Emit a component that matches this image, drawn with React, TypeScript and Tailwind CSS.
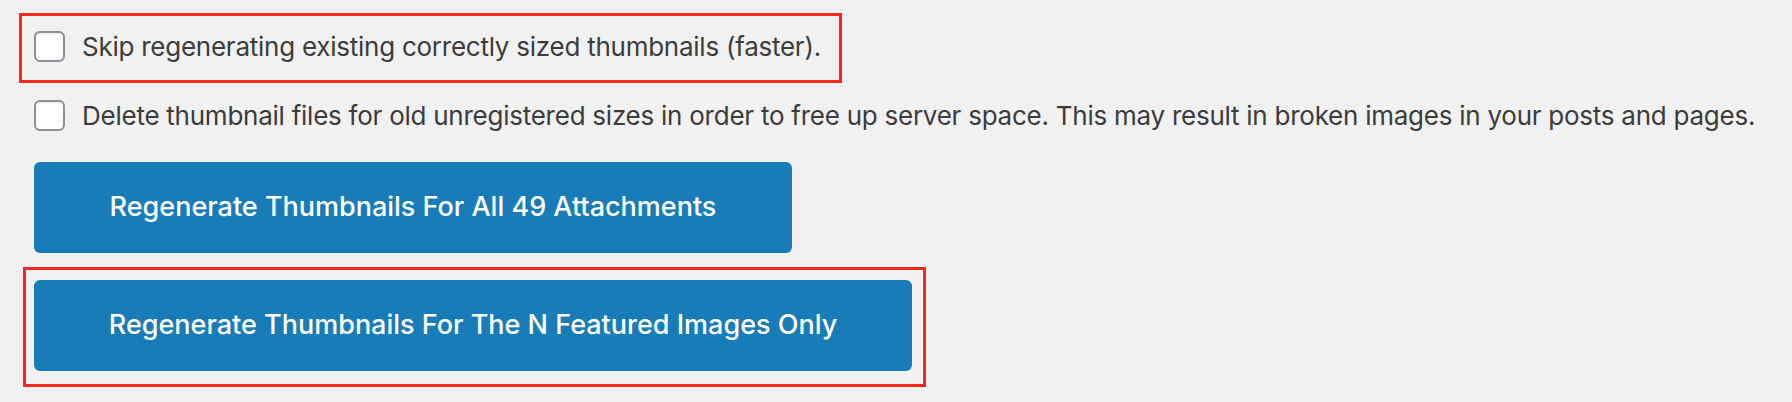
import React from "react";

const font = { fontFamily: "Inter, 'Liberation Sans', sans-serif" };

function Checkbox() {
  return (
    <span className="block w-[31px] h-[31px] shrink-0 rounded-[6px] border-2 border-[#8c9199] bg-white shadow-[inset_0_1px_2px_rgba(0,0,0,0.1)]" />
  );
}

export default function App() {
  return (
    <div
      className="w-[1792px] h-[402px] bg-[#f1f1f1] pt-[13px] overflow-hidden"
      style={font}
    >
      <div className="ml-[19px] w-[823px] h-[70px] border-[3px] border-[#f5281c] flex items-start pt-[15px] pl-[12px]">
        <label className="flex items-center gap-[17px] text-[26px] leading-[31px] text-[#3c3c3c] tracking-[-0.25px]">
          <Checkbox />
          <span>Skip regenerating existing correctly sized thumbnails (faster).</span>
        </label>
      </div>

      <label className="mt-[17px] ml-[34px] flex items-center gap-[17px] text-[26px] leading-[31px] text-[#3c3c3c] tracking-[-0.25px]">
        <Checkbox />
        <span>
          Delete thumbnail files for old unregistered sizes in order to free up server space. This may result in broken images in your posts and pages.
        </span>
      </label>

      <button className="mt-[31px] ml-[34px] w-[758px] h-[91px] rounded-[6px] bg-[#177cb8] text-white text-[27px] font-medium flex items-center justify-center">
        Regenerate Thumbnails For All 49 Attachments
      </button>

      <div className="mt-[14px] ml-[23px] w-[903px] h-[120px] border-[3px] border-[#f5281c] pt-[10px] pl-[8px]">
        <button className="w-[878px] h-[91px] rounded-[6px] bg-[#177cb8] text-white text-[27px] font-medium flex items-center justify-center">
          Regenerate Thumbnails For The N Featured Images Only
        </button>
      </div>
    </div>
  );
}
